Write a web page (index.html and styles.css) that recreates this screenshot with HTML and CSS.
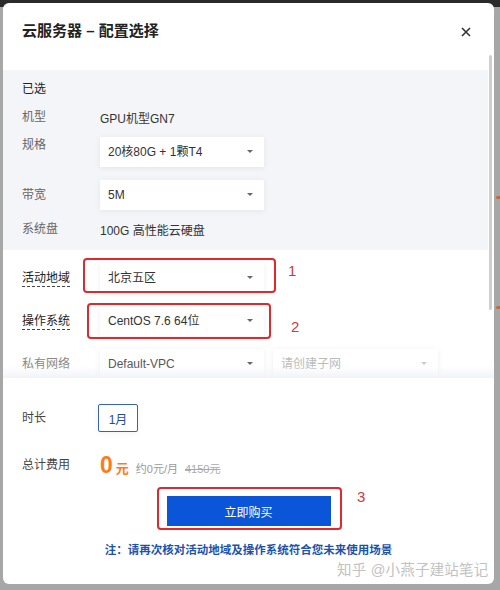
FILE: index.html
```html
<!DOCTYPE html>
<html lang="zh">
<head>
<meta charset="utf-8">
<link rel="stylesheet" href="styles.css">
</head>
<body>
<div class="backdrop">
  <div class="topband"></div>
  <span class="bgmark b1"></span>
  <span class="bgmark b2"></span>
  <div class="modal">
    <div class="header">
      <h1 class="title">云服务器 – 配置选择</h1>
      <svg class="close" width="10" height="10" viewBox="0 0 10 10"><path d="M1 1L9 9M9 1L1 9" stroke="#333" stroke-width="1.6" fill="none"/></svg>
    </div>
    <div class="scroll">
      <div class="chosen">
        <div class="row r1"><span class="label dark">已选</span></div>
        <div class="row r2"><span class="label">机型</span><span class="value">GPU机型GN7</span></div>
        <div class="row r3"><span class="label top">规格</span><div class="select">20核80G + 1颗T4<i class="caret"></i></div></div>
        <div class="row r4"><span class="label">带宽</span><div class="select">5M<i class="caret"></i></div></div>
        <div class="row r5"><span class="label">系统盘</span><span class="value">100G 高性能云硬盘</span></div>
      </div>
      <div class="config">
        <div class="row r6"><span class="label dark"><span class="dotted">活动地域</span></span><div class="select">北京五区<i class="caret"></i></div></div>
        <div class="row r7"><span class="label dark"><span class="dotted">操作系统</span></span><div class="select">CentOS 7.6 64位<i class="caret"></i></div></div>
        <div class="row r8"><span class="label faint">私有网络</span><div class="select">Default-VPC<i class="caret"></i></div><div class="select placeholder">请创建子网<i class="caret light"></i></div></div>
      </div>
      <div class="fade"></div>
    </div>
    <div class="footer">
      <div class="row f1"><span class="label mid">时长</span><button class="dur">1月</button></div>
      <div class="row f2"><span class="label mid">总计费用</span><span class="price"><b class="zero">0</b><b class="yuan">元</b><span class="per">约0元/月</span><s class="orig">4150元</s></span></div>
      <div class="buyrow"><button class="buy">立即购买</button></div>
      <p class="note">注：请再次核对活动地域及操作系统符合您未来使用场景</p>
    </div>
    <div class="mark m1"></div><span class="num n1">1</span>
    <div class="mark m2"></div><span class="num n2">2</span>
    <div class="mark m3"></div><span class="num n3">3</span>
    <div class="scrollbar"></div>
    <span class="watermark">知乎 @小燕子建站笔记</span>
  </div>
</div>
</body>
</html>
```
FILE: styles.css
```css
* { box-sizing: border-box; }
html, body { margin: 0; padding: 0; }
body {
  width: 500px;
  height: 590px;
  overflow: hidden;
  background: #a7a7a7;
  font-family: "Liberation Sans", "Noto Sans CJK SC", sans-serif;
  color: #333;
}
.backdrop { position: relative; width: 500px; height: 590px; }
.topband { position: absolute; left: 0; top: 0; width: 500px; height: 7px; background: #2b2b2b; }
.bgmark { position: absolute; right: 0; width: 4px; height: 3px; background: #c46a3a; border-radius: 2px 0 0 2px; }
.b1 { top: 196px; }
.b2 { top: 306px; }
.modal {
  position: absolute;
  left: 3px;
  top: 3px;
  width: 491px;
  height: 581px;
  background: #fff;
  border-radius: 6px;
  overflow: hidden;
}
.header { height: 67px; padding: 18px 19px 0 19px; display: flex; justify-content: space-between; align-items: flex-start; }
.title { margin: 0; font-size: 15px; line-height: 20px; font-weight: 600; color: #222; }
.close { margin-top: 6px; margin-right: 4px; }
.scroll { position: relative; height: 308px; overflow: hidden; }
.chosen { background: #f4f5f9; padding: 6px 0 10px 19px; margin-right: 6px; }
.config { padding: 6px 0 0 19px; }
.row { display: flex; align-items: center; }
.r1 { height: 26px; }
.r2 { height: 30px; }
.r3 { height: 40px; }
.r4 { height: 46px; }
.r5 { height: 22px; }
.r6 { height: 44px; }
.r7 { height: 42px; }
.r8 { height: 44px; }
.label { width: 78px; flex: none; font-size: 12px; line-height: 18px; color: #666; }
.label.dark { color: #222; }
.label.mid { color: #444; }
.label.faint { color: #888; }
.label.top { align-self: flex-start; margin-top: 4px; }
.dotted { border-bottom: 1px dashed #444; padding-bottom: 1px; }
.value { font-size: 12px; color: #333; }
.select {
  position: relative;
  width: 164px;
  height: 30px;
  line-height: 30px;
  padding-left: 8px;
  background: #fff;
  font-size: 12px;
  color: #333;
  box-shadow: 0 1px 6px rgba(0, 0, 0, 0.07);
}
.select + .select { margin-left: 9px; width: 165px; }
.r8 .select { color: #555; }
.r8 .select.placeholder { color: #bbb; }
.caret {
  position: absolute;
  right: 11px;
  top: 13px;
  width: 0;
  height: 0;
  border-left: 3px solid transparent;
  border-right: 3px solid transparent;
  border-top: 3.5px solid #666;
}
.caret.light { border-top-color: #ccc; }
.fade {
  position: absolute;
  left: 0;
  right: 0;
  bottom: 0;
  height: 12px;
  background: linear-gradient(to bottom, rgba(240, 242, 247, 0), rgba(240, 242, 247, 0.9));
}
.footer { padding: 22px 0 0 19px; }
.f1 { height: 36px; }
.f2 { height: 30px; margin-top: 14px; }
.dur {
  width: 40px;
  height: 28px;
  margin-left: -2px;
  border: 1px solid #3a62b0;
  border-radius: 2px;
  background: #fff;
  color: #1e4b9a;
  font-family: inherit;
  font-size: 12px;
  padding: 0;
  box-shadow: 0 1px 6px rgba(0, 0, 0, 0.06);
}
.price { display: flex; align-items: baseline; }
.zero { font-size: 23px; color: #ff7a1a; font-weight: 700; }
.yuan { font-size: 13px; color: #ff7a1a; font-weight: 700; margin-left: 3px; }
.per { font-size: 11px; color: #999; margin-left: 7px; }
.orig { font-size: 11px; color: #aaa; margin-left: 7px; }
.buyrow { display: flex; justify-content: center; margin: 16px 0 0 -19px; }
.buy {
  width: 164px;
  height: 30px;
  border: 0;
  background: #0b55d9;
  color: #fff;
  font-family: inherit;
  font-size: 12px;
  padding: 0;
}
.note {
  margin: 15px 0 0 -19px;
  text-align: center;
  font-size: 11.5px;
  line-height: 18px;
  font-weight: 600;
  color: #1d52aa;
}
.mark { position: absolute; border: 2px solid #e2272d; border-radius: 4px; }
.m1 { left: 80px; top: 255px; width: 193px; height: 35px; }
.m2 { left: 84px; top: 300px; width: 184px; height: 36px; }
.m3 { left: 154px; top: 484px; width: 185px; height: 43px; }
.num { position: absolute; font-size: 15px; line-height: 18px; color: #d23a3a; }
.n1 { left: 285px; top: 259px; }
.n2 { left: 288px; top: 315px; }
.n3 { left: 354px; top: 485px; }
.scrollbar { position: absolute; left: 486px; top: 52px; width: 3px; height: 255px; border-radius: 2px; background: #cfcfcf; }
.watermark { position: absolute; left: 334px; top: 557px; font-size: 14.5px; line-height: 20px; color: #c2c2c2; letter-spacing: 0.2px; }
```
